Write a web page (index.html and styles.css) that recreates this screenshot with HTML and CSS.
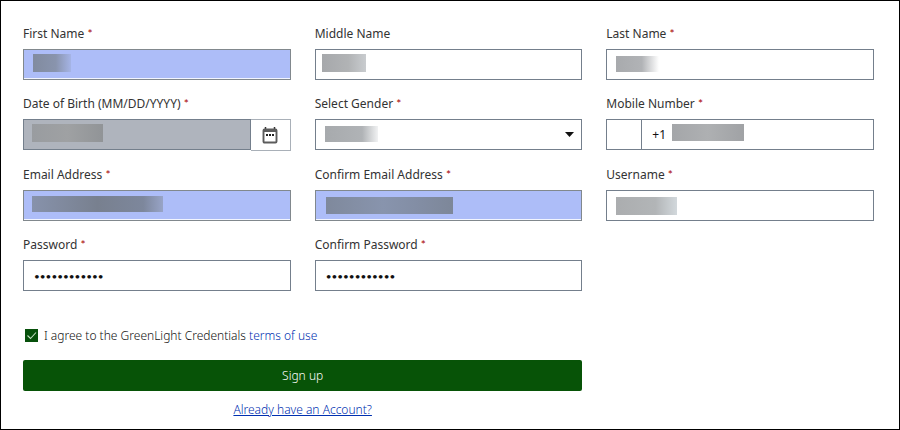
FILE: index.html
```html
<!DOCTYPE html>
<html lang="en">
<head>
<meta charset="utf-8">
<meta name="viewport" content="width=device-width, initial-scale=1">
<title>Sign up</title>
<link rel="stylesheet" href="styles.css">
</head>
<body>
<form class="signup">
  <div class="fields">
    <div class="field">
      <label for="first">First Name <span class="req">*</span></label>
      <div class="control"><input class="box filled" id="first" type="text"><span class="mask mask-first"></span></div>
    </div>
    <div class="field">
      <label for="middle">Middle Name</label>
      <div class="control"><input class="box" id="middle" type="text"><span class="mask mask-middle"></span></div>
    </div>
    <div class="field">
      <label for="last">Last Name <span class="req">*</span></label>
      <div class="control"><input class="box" id="last" type="text"><span class="mask mask-last"></span></div>
    </div>
    <div class="field">
      <label for="dob">Date of Birth (MM/DD/YYYY) <span class="req">*</span></label>
      <div class="control">
        <input class="box readonly" id="dob" type="text" readonly><span class="mask mask-dob"></span>
        <button class="calendar" type="button" aria-label="Choose date">
          <svg width="16" height="18" viewBox="0 0 16 18" aria-hidden="true">
            <path d="M3.500 1v3M12.500 1v3" stroke="#333" stroke-width="1.500"/>
            <rect x="1.500" y="3.500" width="13" height="13" rx="1" fill="none" stroke="#5c5c5c" stroke-width="1.900"/>
            <path d="M1 3h14v3H1z" fill="#5c5c5c"/>
            <path d="M4 8h2v2H4zM7 8h2v2H7zM10 8h2v2h-2z" fill="#222"/>
          </svg>
        </button>
      </div>
    </div>
    <div class="field">
      <label for="gender">Select Gender <span class="req">*</span></label>
      <div class="control">
        <select class="box" id="gender"><option></option></select><span class="mask mask-gender"></span>
        <svg class="arrow" width="9" height="5" viewBox="0 0 9 5" aria-hidden="true"><path d="M0 0h9L4.500 5z" fill="#111"/></svg>
      </div>
    </div>
    <div class="field">
      <label for="mobile">Mobile Number <span class="req">*</span></label>
      <div class="control">
        <input class="box country" type="text" aria-label="Country">
        <input class="box" id="mobile" type="tel" value="+1"><span class="mask mask-mobile"></span>
      </div>
    </div>
    <div class="field">
      <label for="email">Email Address <span class="req">*</span></label>
      <div class="control"><input class="box filled" id="email" type="email"><span class="mask mask-email"></span></div>
    </div>
    <div class="field">
      <label for="email2">Confirm Email Address <span class="req">*</span></label>
      <div class="control"><input class="box filled" id="email2" type="email"><span class="mask mask-email2"></span></div>
    </div>
    <div class="field">
      <label for="user">Username <span class="req">*</span></label>
      <div class="control"><input class="box" id="user" type="text"><span class="mask mask-user"></span></div>
    </div>
    <div class="field">
      <label for="pass">Password <span class="req">*</span></label>
      <div class="control"><input class="box password" id="pass" type="password" value="abcdefghijkl"></div>
    </div>
    <div class="field">
      <label for="pass2">Confirm Password <span class="req">*</span></label>
      <div class="control"><input class="box password" id="pass2" type="password" value="abcdefghijkl"></div>
    </div>
    <div class="actions">
      <div class="agree">
        <span class="tick"><input id="agree" type="checkbox" checked><svg width="13" height="13" viewBox="0 0 13 13" aria-hidden="true"><path d="M2.500 6.500l3 3 5.500-6" fill="none" stroke="#c4e0c4" stroke-width="1.100"/></svg></span>
        <span><label for="agree">I agree to the GreenLight Credentials</label> <a href="#terms">terms of use</a></span>
      </div>
      <button class="submit" type="submit">Sign up</button>
      <a class="login" href="#login">Already have an Account?</a>
    </div>
  </div>
</form>
</body>
</html>
```
FILE: styles.css
```css
* {
  box-sizing: border-box;
}

body {
  margin: 0;
  background: #fff;
  color: #333;
  font: 400 12px/20px "Noto Sans", "Open Sans", sans-serif;
}

.signup {
  min-height: 100vh;
  padding: 23px 25px 8px 22px;
  border: 1px solid #000;
}

.fields {
  display: grid;
  grid-template-columns: repeat(3, 1fr);
  gap: 14px 24px;
}

.field {
  display: flex;
  flex-direction: column;
  gap: 5px;
}

.req {
  color: #a80000;
  font-family: Lato, sans-serif;
}

.control {
  position: relative;
  display: flex;
  align-items: flex-start;
}

.box {
  flex: 1;
  min-width: 0;
  height: 31px;
  margin: 0;
  padding: 0 10px;
  border: 1px solid #747f8c;
  border-radius: 0;
  background: #fff;
  color: #111;
  font: inherit;
  appearance: none;
}

.password {
  font-family: Lato, sans-serif;
  font-size: 10px;
}

.filled {
  border-color: #81888d;
  background: #adbdf8;
  box-shadow: inset 0 -1px #f2f5ff;
}

.readonly {
  background: #afb4bd;
}

.country {
  flex: 0 0 35px;
  border-right: 0;
}

.calendar {
  display: flex;
  align-items: center;
  justify-content: center;
  width: 40px;
  height: 32px;
  padding: 0;
  border: 1px solid #a9b0b8;
  border-left: 0;
  background: #fff;
}

.arrow {
  position: absolute;
  top: 13px;
  right: 8px;
  pointer-events: none;
}

.mask {
  position: absolute;
  top: 5px;
  left: 10px;
  height: 18px;
  background: linear-gradient(90deg, #a6a8ab, #b1b3b5 60%, #c9cccf);
  pointer-events: none;
}

.mask-first {
  width: 38px;
  background: linear-gradient(90deg, #818b9f, #8994ad 60%, #a5b4e6);
}

.mask-middle {
  left: 7px;
  width: 44px;
}

.mask-last {
  top: 7px;
  width: 43px;
  height: 16px;
  background: linear-gradient(90deg, #a8aaad, #b1b3b6 60%, #fff);
}

.mask-dob {
  left: 9px;
  width: 71px;
  background: linear-gradient(90deg, #999ca0, #9fa1a3 50%, #919497);
}

.mask-gender {
  top: 7px;
  width: 53px;
  height: 16px;
  background: linear-gradient(90deg, #a7aaad, #b0b3b6 70%, #f1f2f3);
}

.mask-mobile {
  left: 66px;
  width: 72px;
  height: 17px;
  background: linear-gradient(90deg, #a4a6a9, #aeb0b2 50%, #a0a2a5);
}

.mask-email {
  top: 6px;
  left: 9px;
  width: 131px;
  height: 16px;
  background: linear-gradient(90deg, #8792ab, #78808f 50%, #7d879c 85%, #98a4c7);
}

.mask-email2 {
  top: 7px;
  left: 11px;
  width: 127px;
  height: 17px;
  background: linear-gradient(90deg, #7f899c, #8894ad 45%, #838ea5 70%, #7d8799);
}

.mask-user {
  top: 7px;
  width: 61px;
  background: linear-gradient(90deg, #abadaf, #b2b5b7 65%, #d2d8dc);
}

.actions {
  display: flex;
  grid-column: 1 / 3;
  flex-direction: column;
  padding-top: 21px;
  color: #111;
  font-weight: 300;
}

.agree {
  display: flex;
  align-items: flex-start;
  gap: 6px;
  padding-left: 2px;
}

.tick {
  position: relative;
  width: 13px;
  height: 13px;
  margin-top: 3px;
}

.tick input {
  display: block;
  width: 13px;
  height: 13px;
  margin: 0;
  background: #07500b;
  appearance: none;
}

.tick svg {
  position: absolute;
  inset: 0;
  pointer-events: none;
}

a {
  color: #0030b0;
  text-decoration: none;
}

.submit {
  height: 31px;
  margin: 14px 0 9px;
  border: 0;
  border-radius: 2px;
  background: #075307;
  color: #fff;
  font: inherit;
}

.login {
  align-self: center;
  text-decoration: underline;
}
```
